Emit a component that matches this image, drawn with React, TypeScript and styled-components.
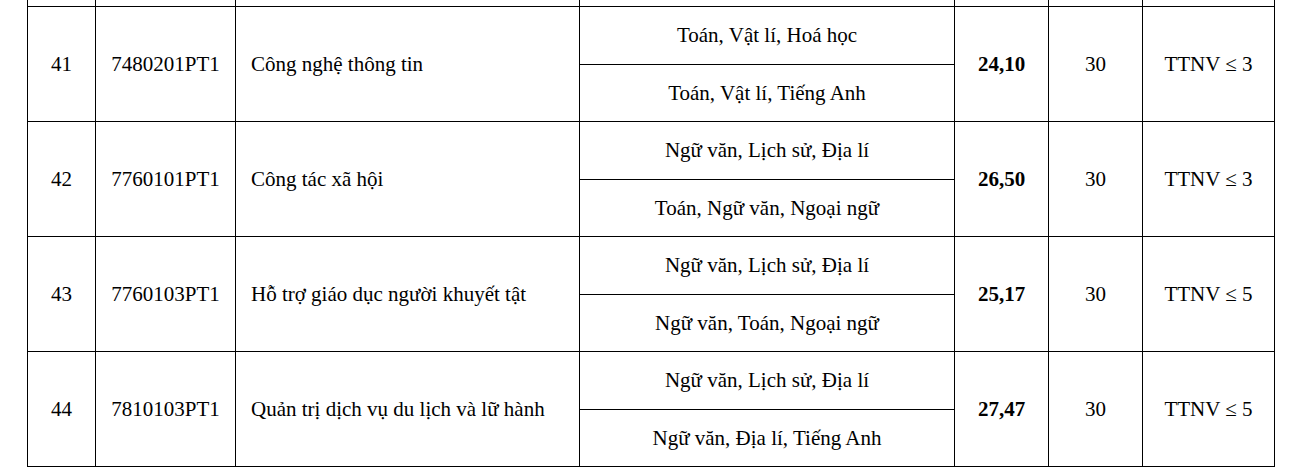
import React from "react";
import styled, { createGlobalStyle } from "styled-components";

const Global = createGlobalStyle`
  html, body { margin: 0; padding: 0; background: #fff; }
  body { font-family: "Liberation Serif", "Times New Roman", serif; color: #000; }
`;

const Page = styled.div`
  width: 1292px;
  height: 476px;
  overflow: hidden;
  padding-left: 27px;
  box-sizing: border-box;
`;

const Table = styled.table`
  border-collapse: collapse;
  table-layout: fixed;
  width: 1248px;
  font-size: 21px;
`;

const StubCell = styled.td`
  height: 6px;
  padding: 0;
  border-left: 1px solid #000;
  border-right: 1px solid #000;
  border-top: none;
`;

const Cell = styled.td<{ $align?: "left" | "center"; $bold?: boolean }>`
  border: 1px solid #000;
  padding: 0 ${(p) => (p.$align === "left" ? "15px" : "4px")};
  text-align: ${(p) => p.$align ?? "center"};
  font-weight: ${(p) => (p.$bold ? 700 : 400)};
  vertical-align: middle;
  white-space: nowrap;
`;

const SubRow = styled.tr<{ $h: number }>`
  height: ${(p) => p.$h}px;
`;

const cols = [68, 140, 344, 375, 94, 94, 132];

type Row = {
  stt: string;
  code: string;
  name: string;
  combos: [string, string];
  score: string;
  quota: string;
  cond: string;
};

const rows: Row[] = [
  {
    stt: "41",
    code: "7480201PT1",
    name: "Công nghệ thông tin",
    combos: ["Toán, Vật lí, Hoá học", "Toán, Vật lí, Tiếng Anh"],
    score: "24,10",
    quota: "30",
    cond: "TTNV ≤ 3",
  },
  {
    stt: "42",
    code: "7760101PT1",
    name: "Công tác xã hội",
    combos: ["Ngữ văn, Lịch sử, Địa lí", "Toán, Ngữ văn, Ngoại ngữ"],
    score: "26,50",
    quota: "30",
    cond: "TTNV ≤ 3",
  },
  {
    stt: "43",
    code: "7760103PT1",
    name: "Hỗ trợ giáo dục người khuyết tật",
    combos: ["Ngữ văn, Lịch sử, Địa lí", "Ngữ văn, Toán, Ngoại ngữ"],
    score: "25,17",
    quota: "30",
    cond: "TTNV ≤ 5",
  },
  {
    stt: "44",
    code: "7810103PT1",
    name: "Quản trị dịch vụ du lịch và lữ hành",
    combos: ["Ngữ văn, Lịch sử, Địa lí", "Ngữ văn, Địa lí, Tiếng Anh"],
    score: "27,47",
    quota: "30",
    cond: "TTNV ≤ 5",
  },
];

export default function App() {
  return (
    <Page>
      <Global />
      <Table>
        <colgroup>
          {cols.map((w, i) => (
            <col key={i} style={{ width: w }} />
          ))}
        </colgroup>
        <tbody>
          <tr>
            {cols.map((_, i) => (
              <StubCell key={i} />
            ))}
          </tr>
          {rows.map((r) => (
            <React.Fragment key={r.stt}>
              <SubRow $h={58}>
                <Cell rowSpan={2}>{r.stt}</Cell>
                <Cell rowSpan={2}>{r.code}</Cell>
                <Cell rowSpan={2} $align="left">
                  {r.name}
                </Cell>
                <Cell>{r.combos[0]}</Cell>
                <Cell rowSpan={2} $bold>
                  {r.score}
                </Cell>
                <Cell rowSpan={2}>{r.quota}</Cell>
                <Cell rowSpan={2}>{r.cond}</Cell>
              </SubRow>
              <SubRow $h={57}>
                <Cell>{r.combos[1]}</Cell>
              </SubRow>
            </React.Fragment>
          ))}
        </tbody>
      </Table>
    </Page>
  );
}
